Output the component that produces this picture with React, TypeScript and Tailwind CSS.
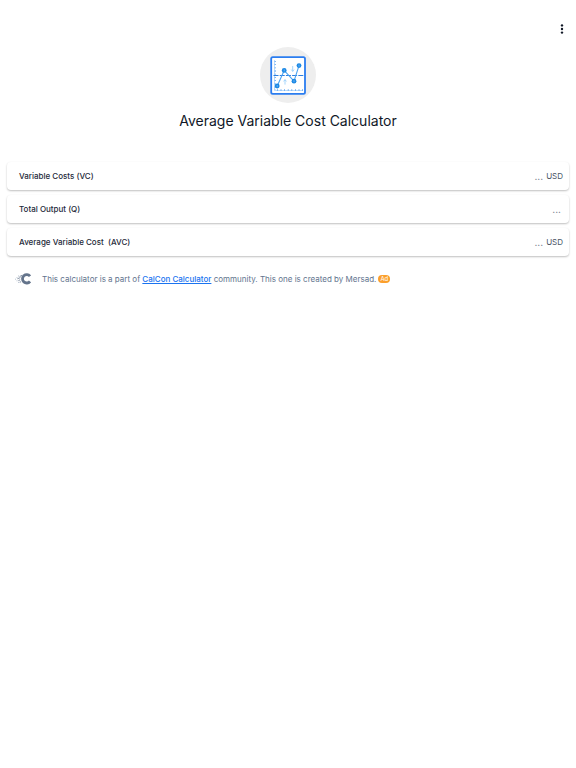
import React from 'react';

interface Field {
  id: string;
  label: string;
  unit?: string;
}

const fields: Field[] = [
  { id: 'variable-costs', label: 'Variable Costs (VC)', unit: 'USD' },
  { id: 'total-output', label: 'Total Output (Q)' },
  { id: 'average-variable-cost', label: 'Average Variable Cost  (AVC)', unit: 'USD' },
];

const ChartIcon: React.FC = () => (
  <svg viewBox="0 0 56 56" className="h-14 w-14" fill="none" aria-hidden="true">
    <circle cx="28" cy="28" r="28" fill="#eeeeee" />
    <rect x="11.2" y="10.2" width="33.8" height="36.6" rx="1.6" fill="#fff" stroke="#2b7df0" strokeWidth="1.8" />
    <path d="M14.5 13v30.5H43" stroke="#8ec2f7" strokeWidth="0.6" />
    <path d="M15.3 14v29" stroke="#4c9af0" strokeWidth="1.3" strokeDasharray="0.8 2.4" />
    <path d="M17 43h26" stroke="#4c9af0" strokeWidth="1.4" strokeDasharray="0.8 2.8" />
    <path d="M13.5 28.5H44" stroke="#2e80e0" strokeWidth="1.1" strokeDasharray="5 1.2" />
    <path d="M17.2 39l7-15.6L34 34.2l5-15.6" stroke="#4ba3f2" strokeWidth="1.1" />
    <path d="M25 37.6v-5m-1.4 1.8 1.4-1.8 1.4 1.8M32.7 19v5.4m-1.4-1.8 1.4 1.8 1.4-1.8" stroke="#9bd0fa" strokeWidth="0.9" />
    <g fill="#1c88e4">
      <circle cx="17.2" cy="39" r="2.4" />
      <circle cx="24.2" cy="23.4" r="2.4" />
      <circle cx="34" cy="34.2" r="2.4" />
      <circle cx="39" cy="18.6" r="2.4" />
    </g>
    <path d="M17.2 38v2M24.2 22.4v2M34 33.2v2M39 17.6v2" stroke="#7cc0f7" strokeWidth="0.8" />
  </svg>
);

const CalConLogo: React.FC = () => (
  <svg viewBox="0 0 16 14" className="h-3.5 w-4 shrink-0" fill="none" aria-hidden="true">
    <path d="M15 4.2A4.2 4.2 0 1 0 15 9.4" stroke="#64748b" strokeWidth="2.8" />
    <path d="M7.2 3.2 4.6 4.6M5.4 5.6 2.4 6.8M5.2 7.8 3.4 8.6M6 9.8 4.6 10.2" stroke="#64748b" strokeWidth="0.8" />
    <path d="M3.2 4h.9M1.6 5.6h.8M.2 7.2h.8M1.6 8.8h.8M3.2 10.4h.8" stroke="#94a3b8" strokeWidth="0.8" />
  </svg>
);

const FieldRow: React.FC<Field> = ({ id, label, unit }) => (
  <div className="flex h-7 items-center rounded bg-white pr-1.5 pl-3 shadow-[0_1px_2px_rgba(0,0,0,0.25)]">
    <label htmlFor={id} className="shrink-0 whitespace-pre font-medium text-gray-800">
      {label}
    </label>
    <input
      id={id}
      type="text"
      placeholder="..."
      className="min-w-0 flex-1 bg-transparent px-0.5 text-right text-[10px] text-gray-700 outline-none placeholder:text-gray-500"
    />
    {unit && <span className="ml-px text-gray-600">{unit}</span>}
  </div>
);

export default function App() {
  return (
    <main className="bg-white px-[7px] font-['Inter',sans-serif] text-[8px] leading-3 text-gray-800">
      <div className="flex h-[47px] justify-end pt-[23px]">
        <button type="button" aria-label="Menu" className="flex h-3 w-3.5 items-center justify-center">
          <svg viewBox="0 0 4 12" className="h-3 w-1" fill="#111827" aria-hidden="true">
            <circle cx="2" cy="2.4" r="1.2" />
            <circle cx="2" cy="6" r="1.2" />
            <circle cx="2" cy="9.6" r="1.2" />
          </svg>
        </button>
      </div>

      <header className="flex flex-col items-center">
        <ChartIcon />
        <h1 className="mt-2 text-sm text-gray-900">Average Variable Cost Calculator</h1>
      </header>

      <form className="mt-[31px] flex flex-col gap-[5px]">
        {fields.map((field) => (
          <FieldRow key={field.id} {...field} />
        ))}
      </form>

      <footer className="mt-4 flex items-center px-2">
        <CalConLogo />
        <p className="ml-[11px] text-slate-500">
          This calculator is a part of{' '}
          <a href="#" className="font-medium text-[#1a73f0] underline">CalCon Calculator</a>{' '}
          community. This one is created by Mersad.
        </p>
        <span className="ml-0.5 rounded-full bg-[#fb9f2c] px-0.5 text-[6px] leading-2 text-white">Ad</span>
      </footer>
    </main>
  );
}
